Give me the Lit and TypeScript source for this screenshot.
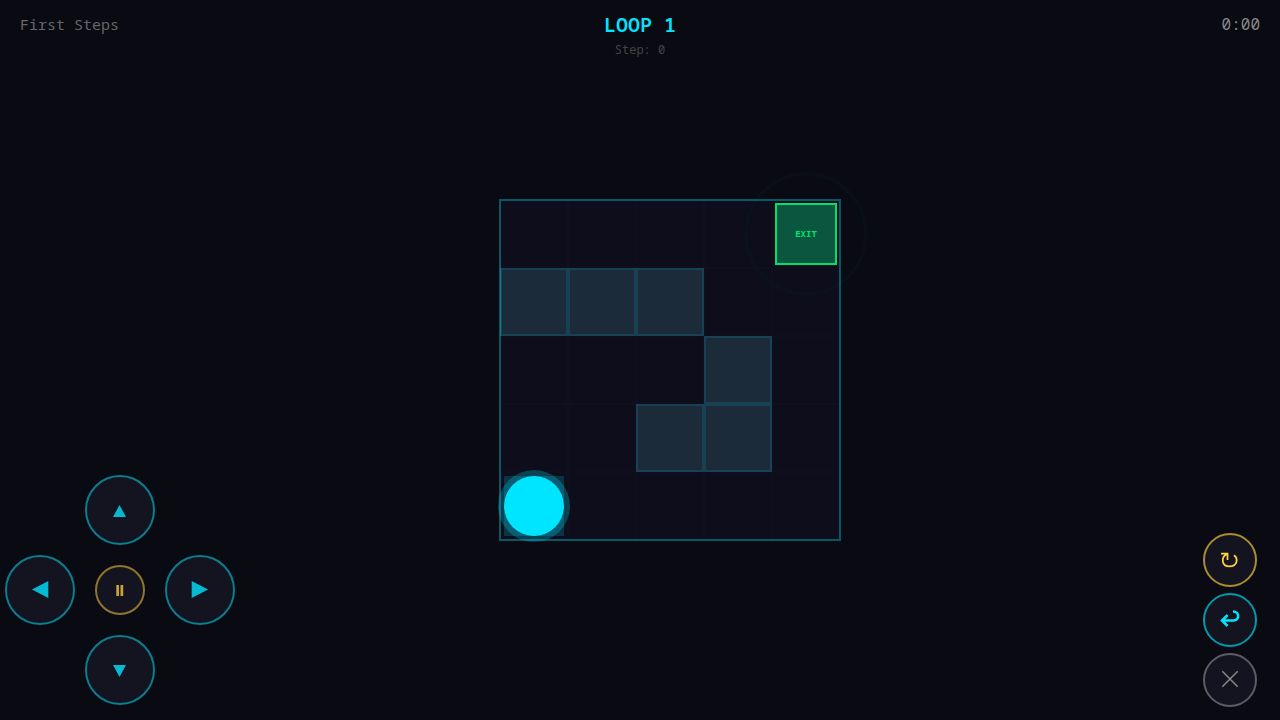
import { LitElement, html, css, svg } from "lit";
import { customElement, property, state } from "lit/decorators.js";

const LEVEL = [
  "....E",
  "###..",
  "...#.",
  "..##.",
  "P....",
];

const ICONS: Record<string, unknown> = {
  up: svg`<path d="M19.500 15 26 27H13z" fill="currentColor"/>`,
  down: svg`<path d="M13 15H26L19.500 27z" fill="currentColor"/>`,
  left: svg`<path d="M12 19.500 28.300 11V28z" fill="currentColor"/>`,
  right: svg`<path d="M11.700 11 28 19.500 11.700 28z" fill="currentColor"/>`,
  pause: svg`<path d="M16.300 15H19V26H16.300zM20.500 15H23.200V26H20.500z" fill="currentColor"/>`,
  restart: svg`<path d="M16.500 14.200C10.800 17.500 11.500 26.400 19.500 26.400C27.600 26.400 28.300 18.200 24 15.200M11 13.600H17.500V20" fill="none" stroke="currentColor" stroke-width="1.800"/>`,
  undo: svg`<path d="M23 11.500C29.800 11.500 29.800 20.500 23.500 20.500H12M17.600 15 12 20.500 17.600 26" fill="none" stroke="currentColor" stroke-width="2.500"/>`,
  close: svg`<path d="M12.300 11.300 27.700 26.700M27.700 11.300 12.300 26.700" fill="none" stroke="currentColor" stroke-width="1.500"/>`,
};

@customElement("round-button")
class RoundButton extends LitElement {
  @property() icon = "up";
  @property() label = "";

  static styles = css`
    :host { display: block; }
    button {
      box-sizing: border-box;
      display: grid;
      place-items: center;
      width: 100%;
      aspect-ratio: 1;
      padding: 0;
      border: 2px solid var(--ring);
      border-radius: 50%;
      background: #141420;
      color: var(--ink);
      cursor: pointer;
    }
    svg { display: block; width: 40px; height: 40px; }
  `;

  render() {
    return html`<button type="button" aria-label=${this.label}>
      <svg viewBox="0 0 40 40" aria-hidden="true">${ICONS[this.icon]}</svg>
    </button>`;
  }
}

@customElement("game-board")
class GameBoard extends LitElement {
  @property({ attribute: false }) level: string[] = [];

  static styles = css`
    :host { display: block; }
    .board {
      position: relative;
      display: grid;
      grid-template-columns: repeat(5, 68px);
      grid-auto-rows: 68px;
      background: #0d0d1b;
    }
    .board::after {
      content: "";
      position: absolute;
      inset: -1px;
      border: 2px solid rgba(0, 229, 255, 0.35);
      pointer-events: none;
    }
    .cell {
      box-sizing: border-box;
      position: relative;
      display: grid;
      place-items: center;
      border: 1px solid #0f0f1d;
    }
    .wall {
      border: 2px solid #184253;
      background: #1c2b3a;
    }
    .exit {
      box-sizing: border-box;
      display: grid;
      place-items: center;
      width: 62px;
      height: 62px;
      border: 2px solid #00e070;
      background: #0b563f;
      color: #00e070;
      font-size: 9px;
      font-weight: 700;
      line-height: 12px;
    }
    .pulse {
      position: absolute;
      inset: -29px;
      border: 4px solid rgba(0, 229, 255, 0.025);
      border-radius: 50%;
    }
    .start {
      width: 60px;
      height: 60px;
      background: #0b3344;
    }
    .player {
      position: absolute;
      inset: -3px;
      border: 6px solid rgba(0, 229, 255, 0.25);
      border-radius: 50%;
      background: #00e5ff;
      background-clip: padding-box;
      z-index: 1;
    }
  `;

  cell(kind: string) {
    if (kind === "#") return html`<div class="cell wall"></div>`;
    if (kind === "E")
      return html`<div class="cell"><div class="pulse"></div><div class="exit">EXIT</div></div>`;
    if (kind === "P")
      return html`<div class="cell"><div class="start"></div><div class="player"></div></div>`;
    return html`<div class="cell"></div>`;
  }

  render() {
    return html`<div class="board">
      ${this.level.flatMap((row) => [...row].map((k) => this.cell(k)))}
    </div>`;
  }
}

@customElement("app-root")
class AppRoot extends LitElement {
  @state() loop = 1;
  @state() step = 0;

  static styles = css`
    :host {
      display: flex;
      flex-direction: column;
      min-height: 100vh;
      background: #0a0a12;
      font-family: Consolas, "Noto Sans Mono", "DejaVu Sans Mono", monospace;
    }
    header {
      display: grid;
      grid-template-columns: 1fr auto 1fr;
      box-sizing: border-box;
      height: 60px;
      padding: 13px 20px 0;
      line-height: 22px;
      color: #666;
      font-size: 15px;
    }
    .status { text-align: center; }
    h1 {
      margin: 0;
      color: #00e5ff;
      font-size: 20px;
      font-weight: 600;
      line-height: 24px;
    }
    .step { color: #444; font-size: 12px; line-height: 26px; }
    .time { color: #888; font-size: 16px; text-align: right; }
    main {
      flex: 1;
      display: grid;
      grid-template-columns: 240px 1fr 180px;
    }
    .stage {
      display: grid;
      place-items: center;
      padding-bottom: 40px;
    }
    .dpad {
      align-self: end;
      display: grid;
      grid-template-columns: repeat(3, 70px);
      grid-template-rows: repeat(3, 70px);
      grid-template-areas: ". up ." "left pause right" ". down .";
      gap: 10px;
      padding: 0 0 15px 5px;
      --ring: #0a7d8f;
      --ink: #05b9d3;
    }
    .up { grid-area: up; }
    .left { grid-area: left; }
    .right { grid-area: right; }
    .down { grid-area: down; }
    .pause {
      grid-area: pause;
      place-self: center;
      width: 50px;
      --ring: #8f752e;
      --ink: #c7a435;
    }
    .actions {
      place-self: end;
      display: grid;
      grid-template-columns: 54px;
      gap: 6px;
      padding: 0 23px 13px 0;
    }
    .restart { --ring: #a98d2f; --ink: #ffd23a; }
    .undo { --ring: #0597aa; --ink: #00e5ff; }
    .close { --ring: #5c5c64; --ink: #888; }
  `;

  render() {
    return html`
      <header>
        <div>First Steps</div>
        <div class="status">
          <h1>LOOP ${this.loop}</h1>
          <div class="step">Step: ${this.step}</div>
        </div>
        <div class="time">0:00</div>
      </header>
      <main>
        <nav class="dpad" aria-label="Movement">
          <round-button class="up" icon="up" label="Up"></round-button>
          <round-button class="left" icon="left" label="Left"></round-button>
          <round-button class="pause" icon="pause" label="Pause"></round-button>
          <round-button class="right" icon="right" label="Right"></round-button>
          <round-button class="down" icon="down" label="Down"></round-button>
        </nav>
        <section class="stage"><game-board .level=${LEVEL}></game-board></section>
        <nav class="actions" aria-label="Game">
          <round-button class="restart" icon="restart" label="Restart"></round-button>
          <round-button class="undo" icon="undo" label="Undo"></round-button>
          <round-button class="close" icon="close" label="Quit"></round-button>
        </nav>
      </main>
    `;
  }
}
